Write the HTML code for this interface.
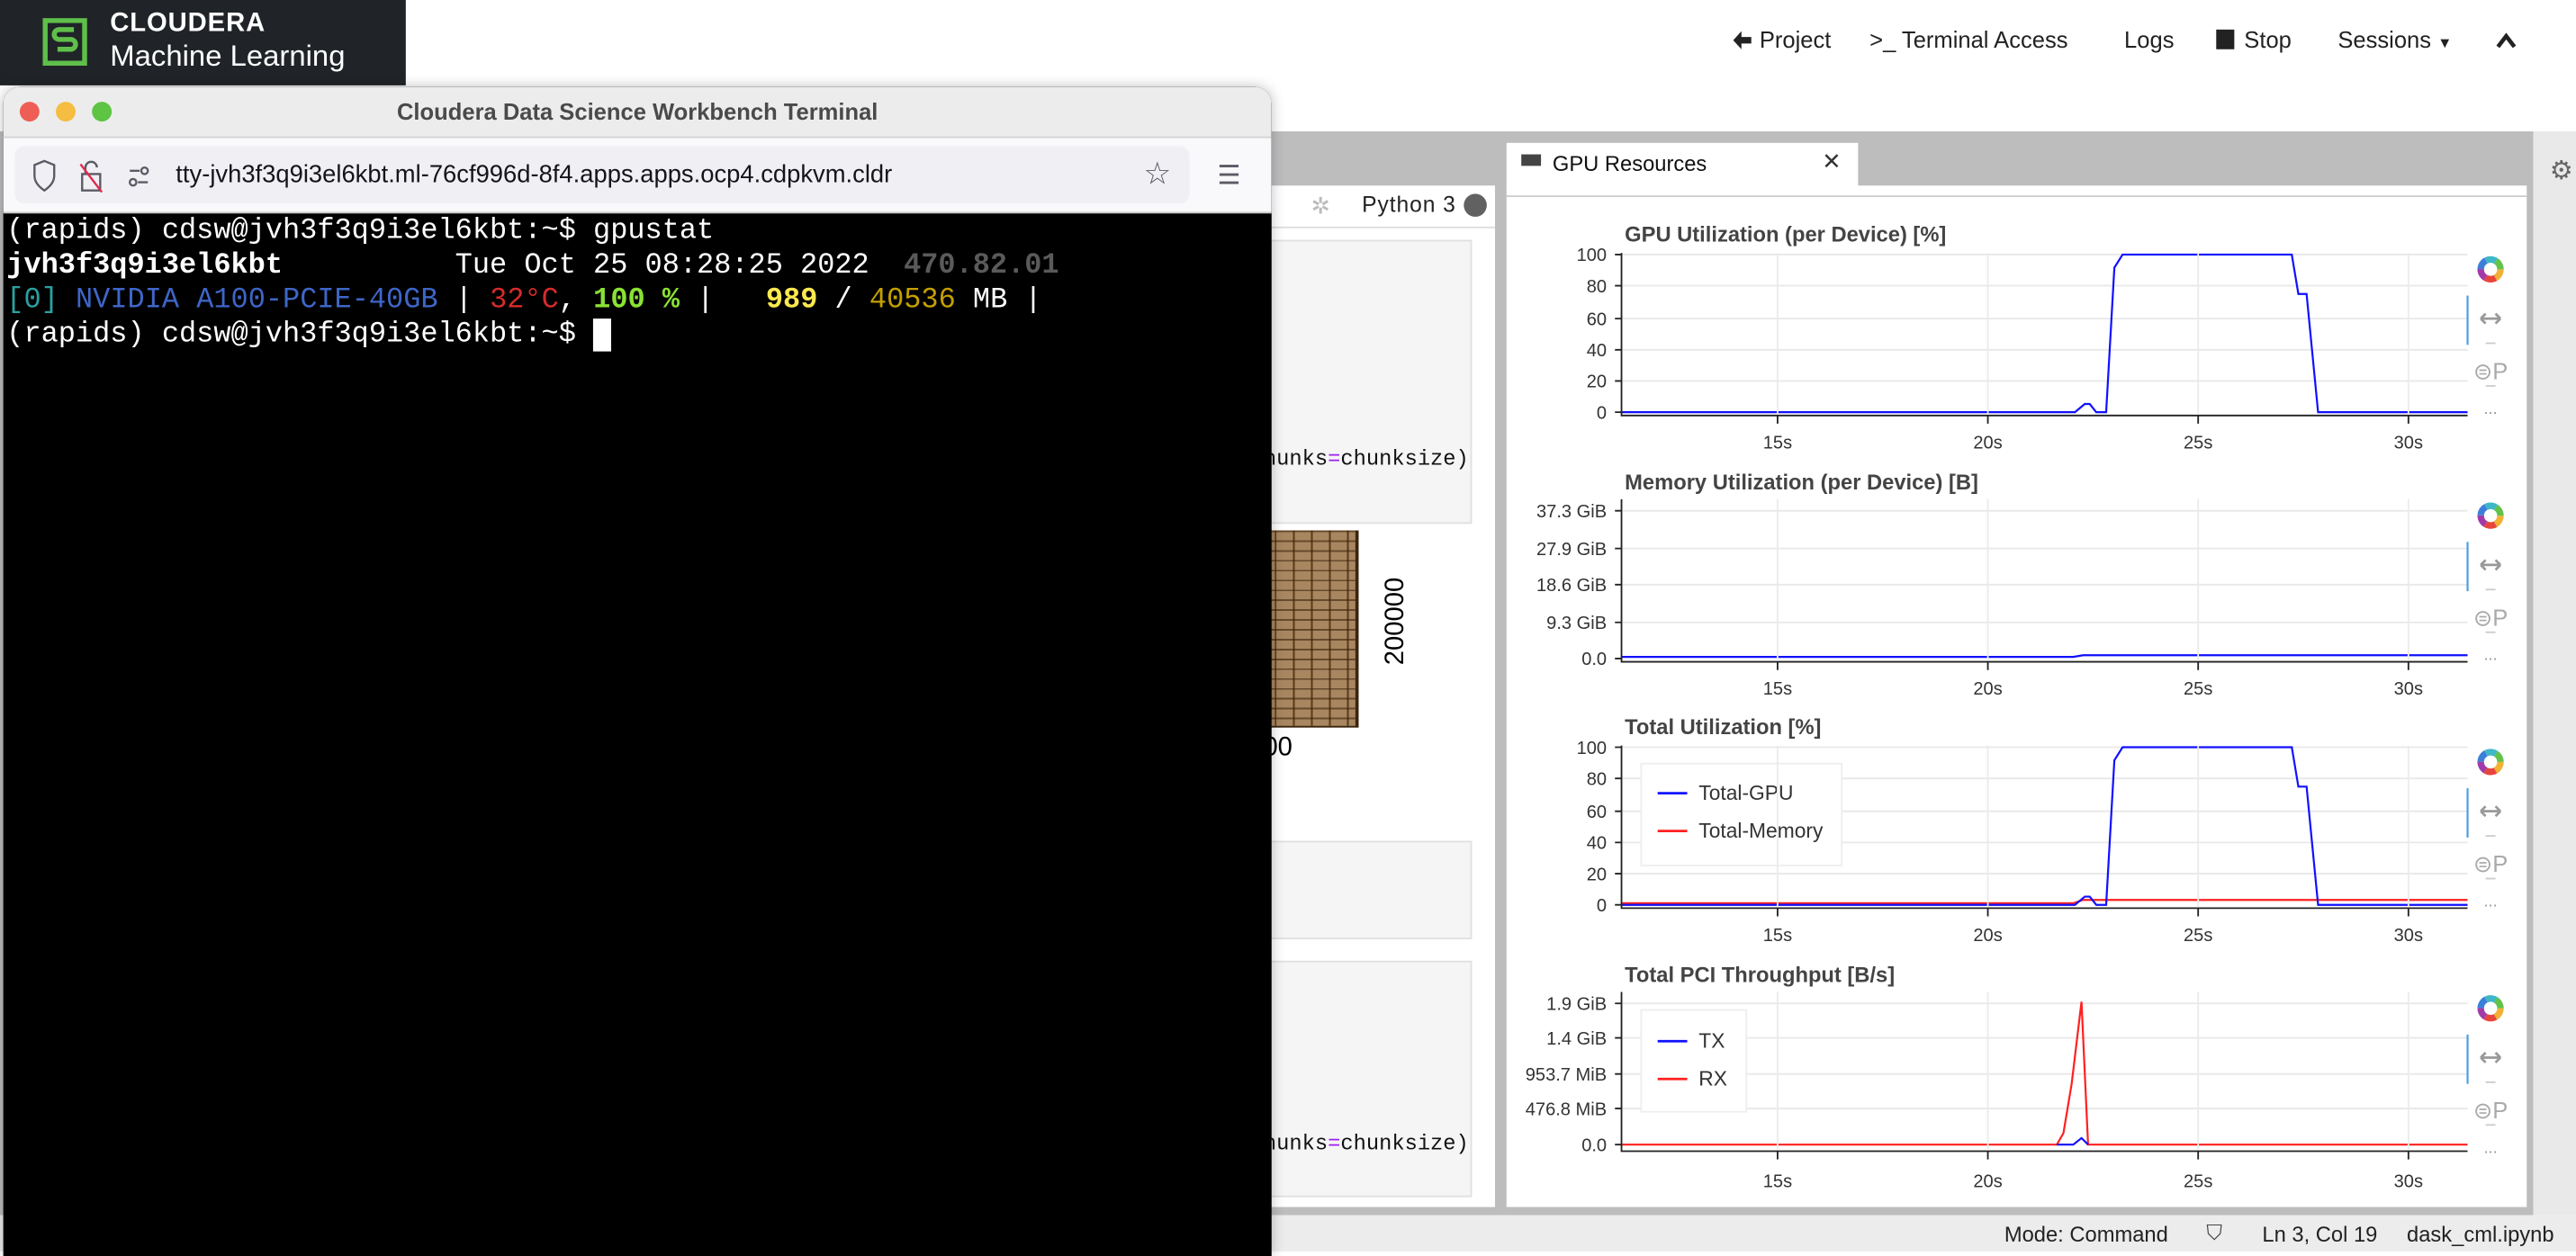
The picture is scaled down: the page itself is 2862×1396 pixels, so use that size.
<!DOCTYPE html>
<html><head><meta charset="utf-8">
<style>
html,body{margin:0;padding:0;width:2862px;height:1390px;overflow:hidden;background:#fff;}
#s{position:absolute;left:0;top:0;width:1568px;height:762px;transform:scale(1.82526);transform-origin:0 0;font-family:"Liberation Sans",sans-serif;}
.a{position:absolute;}
.nav{position:absolute;top:16px;font-size:14px;color:#222;white-space:nowrap;}
.term{font-family:"Liberation Mono",monospace;font-size:17.5px;line-height:21px;color:#fff;white-space:pre;}
</style></head><body>
<div id="s">
<div class="a" style="left:0;top:0;width:247px;height:52px;background:#202428;"></div>
<svg class="a" style="left:26px;top:11px" width="28" height="29" viewBox="0 0 28 29"><rect x="1.5" y="1.5" width="24" height="26" fill="none" stroke="#5fbf4a" stroke-width="3"/><path d="M19 7H10a3 3 0 0 0 0 6h7a3 3 0 0 1 0 6H9" fill="none" stroke="#5fbf4a" stroke-width="3"/></svg>
<div class="a" style="left:67px;top:6px;font-size:16px;font-weight:bold;color:#fff;letter-spacing:0.5px">CLOUDERA</div>
<div class="a" style="left:67px;top:24px;font-size:18px;color:#fff">Machine Learning</div>
<svg class="a" style="left:1054px;top:18px" width="13" height="13" viewBox="0 0 13 13"><path d="M6 1L1 6.5 6 12V8.5h6v-4H6z" fill="#222"/></svg>
<div class="nav" style="left:1071px">Project</div>
<div class="nav" style="left:1138px">&gt;_ Terminal Access</div>
<div class="nav" style="left:1293px">Logs</div>
<div class="nav" style="left:1349px"><span style="display:inline-block;width:11px;height:12px;background:#222;vertical-align:-1px;margin-right:6px"></span>Stop</div>
<div class="nav" style="left:1423px">Sessions <span style="font-size:9px">▼</span></div>
<svg class="a" style="left:1519px;top:20px" width="13" height="10" viewBox="0 0 13 10"><path d="M1.5 8.5L6.5 2l5 6.5" fill="none" stroke="#222" stroke-width="2.5"/></svg>

<div class="a" style="left:0;top:80px;width:1542px;height:660px;background:#bdbdbd"></div>
<div class="a" style="left:1542px;top:80px;width:26px;height:660px;background:#e9e9e9"></div>
<div class="a" style="left:1552px;top:94px;font-size:16px;color:#666">⚙</div>
<div class="a" style="left:0;top:740px;width:1568px;height:22px;background:#ececec"></div>
<div class="a" style="left:1220px;top:744px;font-size:13px;color:#222;white-space:nowrap">Mode: Command</div>
<div class="a" style="left:1343px;top:743px;font-size:13px;color:#444">⛉</div>
<div class="a" style="left:1377px;top:744px;font-size:13px;color:#222;white-space:nowrap">Ln 3, Col 19</div>
<div class="a" style="left:1465px;top:744px;font-size:13px;color:#222;white-space:nowrap">dask_cml.ipynb</div>

<div class="a" style="left:700px;top:113px;width:210px;height:622px;background:#fff"></div>
<div class="a" style="left:700px;top:138px;width:210px;height:1px;background:#ddd"></div>
<div class="a" style="left:798px;top:117px;font-size:14px;color:#bbb">✲</div>
<div class="a" style="left:829px;top:117px;font-size:13.5px;color:#222;letter-spacing:0.5px">Python 3</div>
<div class="a" style="left:891px;top:118px;width:14px;height:14px;border-radius:50%;background:#616161"></div>
<div class="a" style="left:700px;top:146px;width:196px;height:173px;background:#f5f5f5;border:1px solid #e0e0e0;box-sizing:border-box"></div>
<div class="a" style="left:700px;top:272px;width:194px;text-align:right;font-family:'Liberation Mono',monospace;font-size:13px;color:#111;white-space:nowrap">hunks<span style="color:#a020f0">=</span>chunksize)</div>
<div class="a" style="left:700px;top:323px;width:127px;height:120px;background:repeating-linear-gradient(90deg,#a88660 0 10px,#5a3a1a 10px 11px),#a88660;border-right:2px solid #3a2510;border-bottom:1px solid #3a2510;box-sizing:border-box"></div>
<div class="a" style="left:700px;top:323px;width:125px;height:120px;background:repeating-linear-gradient(0deg,transparent 0 5px,rgba(60,35,10,.6) 5px 6px)"></div>
<div class="a" style="left:830px;top:376px;font-size:16px;color:#000;transform:rotate(-90deg);transform-origin:center;width:40px;text-align:center;">200000</div>
<div class="a" style="left:760px;top:447px;font-size:16px;color:#000">000</div>
<div class="a" style="left:700px;top:512px;width:196px;height:60px;background:#f5f5f5;border:1px solid #e0e0e0;box-sizing:border-box"></div>
<div class="a" style="left:700px;top:585px;width:196px;height:144px;background:#f5f5f5;border:1px solid #e0e0e0;box-sizing:border-box"></div>
<div class="a" style="left:700px;top:689px;width:194px;text-align:right;font-family:'Liberation Mono',monospace;font-size:13px;color:#111;white-space:nowrap">hunks<span style="color:#a020f0">=</span>chunksize)</div>

<div class="a" style="left:917px;top:87px;width:214px;height:27px;background:#fff"></div>
<div class="a" style="left:926px;top:94px;width:12px;height:7px;background:#444"></div>
<div class="a" style="left:945px;top:92px;font-size:13px;color:#111">GPU Resources</div>
<div class="a" style="left:1109px;top:90px;font-size:14px;color:#333">✕</div>
<div class="a" style="left:917px;top:113px;width:621px;height:622px;background:#fff"></div>
<div class="a" style="left:917px;top:119px;width:621px;height:1px;background:#ccc"></div>

<svg class="a" style="left:0;top:0" width="1568" height="762" viewBox="0 0 1568 762" font-family="Liberation Sans, sans-serif">
<defs>
<g id="tb">
 <circle cx="0" cy="0" r="6" fill="none" stroke-width="4" stroke="#f2b134" stroke-dasharray="6.3 31.7"/>
 <circle cx="0" cy="0" r="6" fill="none" stroke-width="4" stroke="#e8453c" stroke-dasharray="0 6.3 6.3 25.4"/>
 <circle cx="0" cy="0" r="6" fill="none" stroke-width="4" stroke="#a23ba8" stroke-dasharray="0 12.6 6.3 19.1"/>
 <circle cx="0" cy="0" r="6" fill="none" stroke-width="4" stroke="#3b7fd9" stroke-dasharray="0 18.9 6.3 12.8"/>
 <circle cx="0" cy="0" r="6" fill="none" stroke-width="4" stroke="#3fb7c7" stroke-dasharray="0 25.2 6.3 6.5"/>
 <circle cx="0" cy="0" r="6" fill="none" stroke-width="4" stroke="#62c24a" stroke-dasharray="0 31.5 6.5 0"/>
 <line x1="-14" y1="16" x2="-14" y2="46" stroke="#4a9fe0" stroke-width="1.2"/>
 <path d="M-6 30h12M-6 30l3-3M-6 30l3 3M6 30l-3-3M6 30l-3 3" stroke="#999" stroke-width="1.5" fill="none"/>
 <line x1="-3" y1="45" x2="3" y2="45" stroke="#ccc"/>
 <text x="0" y="67" font-size="14" fill="#aaa" text-anchor="middle">⊜P</text>
 <line x1="-3" y1="71" x2="3" y2="71" stroke="#ccc"/>
 <text x="0" y="88" font-size="10" fill="#999" text-anchor="middle">...</text>
</g>
</defs>
<g stroke="#e8e8e8"><line x1="987" y1="155" x2="1502" y2="155"/></g>
<text x="989" y="147" font-size="13" font-weight="bold" fill="#444">GPU Utilization (per Device) [%]</text>
<g stroke="#e8e8e8"><line x1="987" y1="232" x2="1502" y2="232"/><line x1="987" y1="213" x2="1502" y2="213"/><line x1="987" y1="194" x2="1502" y2="194"/><line x1="987" y1="174" x2="1502" y2="174"/></g>
<g font-size="11" fill="#333" text-anchor="end"><text x="978" y="159">100</text><text x="978" y="198">60</text><text x="978" y="178">80</text><text x="978" y="217">40</text><text x="978" y="236">20</text><text x="978" y="255">0</text></g>
<path d="M987,251 L1263,251 L1269,246 L1272,246 L1276,251 L1282,251 L1287,163 L1292,155 L1395,155 L1399,179 L1404,179 L1411,251 L1502,251" fill="none" stroke="#1010ff" stroke-width="1.2"/>

<text x="989" y="298" font-size="13" font-weight="bold" fill="#444">Memory Utilization (per Device) [B]</text>
<g stroke="#e8e8e8"><line x1="987" y1="311" x2="1502" y2="311"/><line x1="987" y1="334" x2="1502" y2="334"/><line x1="987" y1="356" x2="1502" y2="356"/><line x1="987" y1="379" x2="1502" y2="379"/></g>
<g font-size="11" fill="#333" text-anchor="end"><text x="978" y="315">37.3 GiB</text><text x="978" y="338">27.9 GiB</text><text x="978" y="360">18.6 GiB</text><text x="978" y="383">9.3 GiB</text><text x="978" y="405">0.0</text></g>
<path d="M987,400 L1262,400 L1268,399 L1502,399" fill="none" stroke="#1010ff" stroke-width="1.2"/>

<text x="989" y="447" font-size="13" font-weight="bold" fill="#444">Total Utilization [%]</text>
<g stroke="#e8e8e8"><line x1="987" y1="455" x2="1502" y2="455"/><line x1="987" y1="474" x2="1502" y2="474"/><line x1="987" y1="494" x2="1502" y2="494"/><line x1="987" y1="513" x2="1502" y2="513"/><line x1="987" y1="532" x2="1502" y2="532"/></g>
<g font-size="11" fill="#333" text-anchor="end"><text x="978" y="459">100</text><text x="978" y="478">80</text><text x="978" y="498">60</text><text x="978" y="517">40</text><text x="978" y="536">20</text><text x="978" y="555">0</text></g>
<path d="M987,550 L1262,550 L1268,548 L1502,548" fill="none" stroke="#ff2020" stroke-width="1.2"/>
<path d="M987,551 L1263,551 L1269,546 L1272,546 L1276,551 L1282,551 L1287,463 L1292,455 L1395,455 L1399,479 L1404,479 L1411,551 L1502,551" fill="none" stroke="#1010ff" stroke-width="1.2"/>
<rect x="999" y="465" width="122" height="62" fill="#fff" stroke="#eee"/>
<line x1="1009" y1="483" x2="1027" y2="483" stroke="#1010ff" stroke-width="1.5"/><text x="1034" y="487" font-size="12.5" fill="#333">Total-GPU</text>
<line x1="1009" y1="506" x2="1027" y2="506" stroke="#ff2020" stroke-width="1.5"/><text x="1034" y="510" font-size="12.5" fill="#333">Total-Memory</text>

<text x="989" y="598" font-size="13" font-weight="bold" fill="#444">Total PCI Throughput [B/s]</text>
<g stroke="#e8e8e8"><line x1="987" y1="611" x2="1502" y2="611"/><line x1="987" y1="632" x2="1502" y2="632"/><line x1="987" y1="654" x2="1502" y2="654"/><line x1="987" y1="675" x2="1502" y2="675"/></g>
<g font-size="11" fill="#333" text-anchor="end"><text x="978" y="615">1.9 GiB</text><text x="978" y="636">1.4 GiB</text><text x="978" y="658">953.7 MiB</text><text x="978" y="679">476.8 MiB</text><text x="978" y="701">0.0</text></g>
<path d="M987,697 L1252,697 L1256,690 L1261,660 L1267,610 L1271,697 L1502,697" fill="none" stroke="#ff2020" stroke-width="1.2"/>
<path d="M1252,697 L1262,697 L1267,693 L1271,697" fill="none" stroke="#1010ff" stroke-width="1.2"/>
<rect x="999" y="615" width="64" height="62" fill="#fff" stroke="#eee"/>
<line x1="1009" y1="634" x2="1027" y2="634" stroke="#1010ff" stroke-width="1.5"/><text x="1034" y="638" font-size="12.5" fill="#333">TX</text>
<line x1="1009" y1="657" x2="1027" y2="657" stroke="#ff2020" stroke-width="1.5"/><text x="1034" y="661" font-size="12.5" fill="#333">RX</text>

<g stroke="#ebebeb">
<path d="M1082 154V252M1210 154V252M1338 154V252M1466 154V252M1082 304V402M1210 304V402M1338 304V402M1466 304V402M1082 454V552M1210 454V552M1338 454V552M1466 454V552M1082 604V700M1210 604V700M1338 604V700M1466 604V700"/>
</g>
<g stroke="#222" stroke-width="1" fill="none">
<path d="M987 154V253H1502M987 304V403H1502M987 454V553H1502M987 604V701H1502"/>
<path d="M983 155H987M983 174H987M983 194H987M983 213H987M983 232H987M983 251H987M1082 253v5M1210 253v5M1338 253v5M1466 253v5"/>
<path d="M983 311H987M983 334H987M983 356H987M983 379H987M983 401H987M1082 403v5M1210 403v5M1338 403v5M1466 403v5"/>
<path d="M983 455H987M983 474H987M983 494H987M983 513H987M983 532H987M983 551H987M1082 553v5M1210 553v5M1338 553v5M1466 553v5"/>
<path d="M983 611H987M983 632H987M983 654H987M983 675H987M983 697H987M1082 701v5M1210 701v5M1338 701v5M1466 701v5"/>
</g>
<g font-size="11" fill="#333" text-anchor="middle">
<text x="1082" y="273">15s</text><text x="1210" y="273">20s</text><text x="1338" y="273">25s</text><text x="1466" y="273">30s</text>
<text x="1082" y="423">15s</text><text x="1210" y="423">20s</text><text x="1338" y="423">25s</text><text x="1466" y="423">30s</text>
<text x="1082" y="573">15s</text><text x="1210" y="573">20s</text><text x="1338" y="573">25s</text><text x="1466" y="573">30s</text>
<text x="1082" y="723">15s</text><text x="1210" y="723">20s</text><text x="1338" y="723">25s</text><text x="1466" y="723">30s</text>
</g>
<use href="#tb" x="1516" y="164"/>
<use href="#tb" x="1516" y="314"/>
<use href="#tb" x="1516" y="464"/>
<use href="#tb" x="1516" y="614"/>
</svg>

<div class="a" style="left:2px;top:53px;width:772px;height:712px;background:#000;border-radius:10px 10px 0 0;overflow:hidden;box-shadow:0 0 8px rgba(0,0,0,.25)">
 <div class="a" style="left:0;top:0;width:772px;height:30px;background:#ececec;border-bottom:1px solid #d6d6d6"></div>
 <div class="a" style="left:10px;top:9px;width:12px;height:12px;border-radius:50%;background:#ee5e56"></div>
 <div class="a" style="left:32px;top:9px;width:12px;height:12px;border-radius:50%;background:#f5bd41"></div>
 <div class="a" style="left:54px;top:9px;width:12px;height:12px;border-radius:50%;background:#5ec443"></div>
 <div class="a" style="left:0;top:7px;width:772px;text-align:center;font-size:14px;font-weight:bold;color:#4a4a4a">Cloudera Data Science Workbench Terminal</div>
 <div class="a" style="left:0;top:31px;width:772px;height:45px;background:#f9f9fb"></div>
 <div class="a" style="left:7px;top:36px;width:715px;height:35px;background:#f0f0f4;border-radius:6px"></div>
 <svg class="a" style="left:16px;top:43px" width="90" height="22" viewBox="0 0 90 22" fill="none" stroke="#5b5b66" stroke-width="1.3">
  <path d="M9 2L3 4.5V11c0 4 3 7 6 9 3-2 6-5 6-9V4.5z"/>
  <path d="M34 10V6a3.5 3.5 0 0 1 7 0M32 10h11v10H32z"/><path d="M31 4l13 17" stroke="#e22850"/>
  <circle cx="63" cy="15" r="2"/><path d="M66 15h6M61 8h6"/><circle cx="70" cy="8" r="2"/>
 </svg>
 <div class="a" style="left:105px;top:45px;font-size:15px;color:#15141a;white-space:nowrap">tty-jvh3f3q9i3el6kbt.ml-76cf996d-8f4.apps.apps.ocp4.cdpkvm.cldr</div>
 <div class="a" style="left:694px;top:42px;font-size:19px;color:#5b5b66">☆</div>
 <div class="a" style="left:739px;top:44px;font-size:16px;color:#5b5b66">☰</div>
 <div class="a" style="left:0;top:76px;width:772px;height:1px;background:#ccc"></div>
 <div class="a term" style="left:2px;top:78px">(rapids) cdsw@jvh3f3q9i3el6kbt:~$ gpustat
<b>jvh3f3q9i3el6kbt</b>          Tue Oct 25 08:28:25 2022  <b style="color:#5a5a5a">470.82.01</b>
<span style="color:#2aa1a1">[0]</span> <span style="color:#3e66c8">NVIDIA A100-PCIE-40GB</span> | <span style="color:#d62b2b">32°C</span>, <b style="color:#8ae234">100 %</b> |   <b style="color:#fce94f">989</b> / <span style="color:#c4a000">40536</span> MB |
(rapids) cdsw@jvh3f3q9i3el6kbt:~$ <span style="background:#fff"> </span></div>
</div>
</div>
</body></html>
